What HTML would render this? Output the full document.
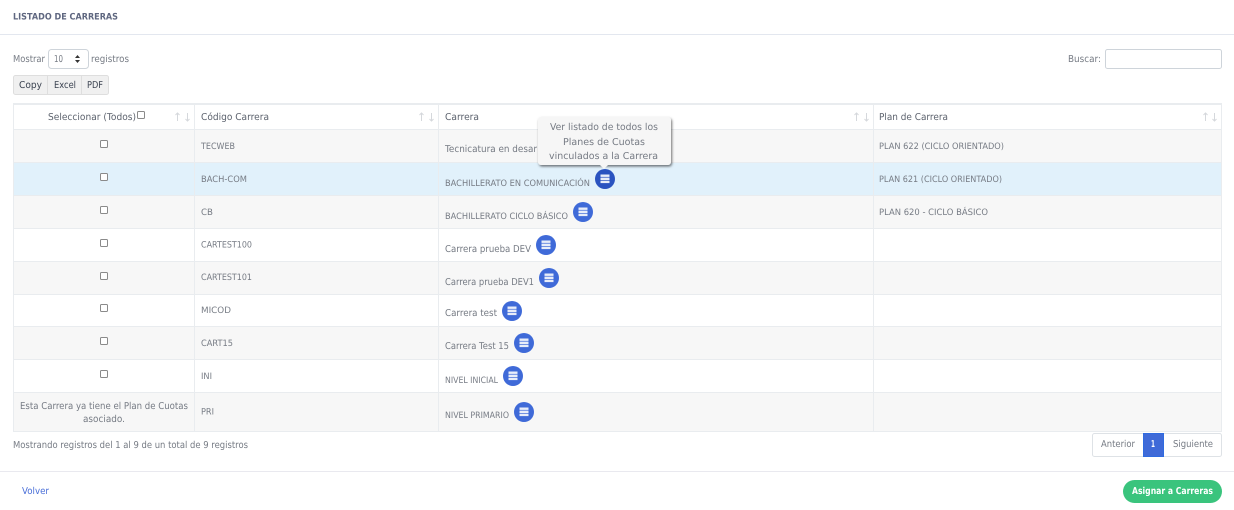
<!DOCTYPE html>
<html lang="es">
<head>
<meta charset="utf-8">
<title>Listado de Carreras</title>
<style>
html,body{margin:0;padding:0;background:#fff;width:1234px;height:510px;overflow:hidden}
svg{display:block}
text{font-family:"DejaVu Sans",sans-serif;font-size:9.5px;fill:#767b84;text-rendering:geometricPrecision}
.u{font-size:8.8px}
.h{fill:#5d636e}
.b{font-weight:bold}
.cb{fill:#fff;stroke:#8a8a8a;stroke-width:1}
.bl{fill:#fff}
</style>
</head>
<body>
<svg width="1234" height="510" viewBox="0 0 1234 510" xmlns="http://www.w3.org/2000/svg">
<defs>
<filter id="sh" x="-10%" y="-10%" width="125%" height="130%"><feDropShadow dx="1" dy="1.5" stdDeviation="1.2" flood-color="#000" flood-opacity=".55"/></filter>
<g id="ic"><rect x="-4.500" y="-4.500" width="9" height="2.400" fill="#e8edf9"/><rect x="-4.500" y="-1.400" width="9" height="2.400" fill="#e8edf9"/><rect x="-4.500" y="1.700" width="9" height="2.400" fill="#e8edf9"/></g>
</defs>

<text x="13" y="19.500" class="b" style="fill:#5f6780;font-size:9px" textLength="105" lengthAdjust="spacingAndGlyphs">LISTADO DE CARRERAS</text>
<rect x="0" y="34" width="1234" height="1" fill="#e3e7ef"/>

<text x="13" y="62" textLength="32" lengthAdjust="spacingAndGlyphs">Mostrar</text>
<rect x="48.500" y="49.500" width="40" height="19" rx="3" fill="#fff" stroke="#ced4da"/>
<text x="54" y="62" textLength="9" lengthAdjust="spacingAndGlyphs">10</text>
<path d="M75 58l2.500-3 2.500 3zM75 60l2.500 3 2.500-3z" fill="#333"/>
<text x="91" y="62" textLength="38" lengthAdjust="spacingAndGlyphs">registros</text>

<rect x="13.500" y="75.500" width="95" height="19" rx="2" fill="#f0f0f0" stroke="#dedede"/>
<path d="M47.500 75v20M81.500 75v20" stroke="#dedede"/>
<text x="19" y="88" textLength="23" lengthAdjust="spacingAndGlyphs" style="fill:#3a4250">Copy</text>
<text x="54" y="88" textLength="22" lengthAdjust="spacingAndGlyphs" style="fill:#3a4250">Excel</text>
<text x="87" y="88" textLength="16" lengthAdjust="spacingAndGlyphs" style="fill:#3a4250">PDF</text>

<text x="1068" y="62" textLength="33" lengthAdjust="spacingAndGlyphs">Buscar:</text>
<rect x="1105.500" y="49.500" width="116" height="19" rx="2" fill="#fff" stroke="#ced4da"/>

<!-- table rows -->
<rect x="13" y="130" width="1209" height="32" fill="#f7f7f7"/>
<rect x="13" y="163" width="1209" height="32" fill="#e1f1fb"/>
<rect x="13" y="196" width="1209" height="32" fill="#f7f7f7"/>
<rect x="13" y="262" width="1209" height="32" fill="#f7f7f7"/>
<rect x="13" y="327" width="1209" height="32" fill="#f7f7f7"/>
<rect x="13" y="393" width="1209" height="38" fill="#f7f7f7"/>
<rect x="13" y="103" width="1209" height="2" fill="#e9ecef"/>
<path d="M13 129.500h1209M13 162.500h1209M13 195.500h1209M13 228.500h1209M13 261.500h1209M13 294.500h1209M13 326.500h1209M13 359.500h1209M13 392.500h1209M13 431.500h1209M13.500 103v329M194.500 103v329M438.500 103v329M873.500 103v329M1221.500 103v329" stroke="#e9ecef" fill="none"/>

<!-- header -->
<text x="48" y="120" class="h" textLength="88" lengthAdjust="spacingAndGlyphs">Seleccionar (Todos)</text>
<rect x="137.500" y="111.500" width="7" height="7" rx="1" class="cb"/>
<text x="201" y="120" class="h" textLength="68" lengthAdjust="spacingAndGlyphs">Código Carrera</text>
<text x="445" y="120" class="h" textLength="34" lengthAdjust="spacingAndGlyphs">Carrera</text>
<text x="879" y="120" class="h" textLength="69" lengthAdjust="spacingAndGlyphs">Plan de Carrera</text>
<g stroke="#d5d8dc" fill="none" stroke-width="1">
<path d="M177.500 121v-8m-2 2l2-2 2 2M187.500 113v8m-2-2l2 2 2-2"/>
<path d="M421.500 121v-8m-2 2l2-2 2 2M431.500 113v8m-2-2l2 2 2-2"/>
<path d="M856.500 121v-8m-2 2l2-2 2 2M866.500 113v8m-2-2l2 2 2-2"/>
<path d="M1205.500 121v-8m-2 2l2-2 2 2M1214.500 113v8m-2-2l2 2 2-2"/>
</g>

<!-- checkboxes -->
<rect x="100.500" y="140.500" width="7" height="7" rx="1" class="cb"/>
<rect x="100.500" y="173.500" width="7" height="7" rx="1" class="cb"/>
<rect x="100.500" y="206.500" width="7" height="7" rx="1" class="cb"/>
<rect x="100.500" y="239.500" width="7" height="7" rx="1" class="cb"/>
<rect x="100.500" y="272.500" width="7" height="7" rx="1" class="cb"/>
<rect x="100.500" y="304.500" width="7" height="7" rx="1" class="cb"/>
<rect x="100.500" y="337.500" width="7" height="7" rx="1" class="cb"/>
<rect x="100.500" y="370.500" width="7" height="7" rx="1" class="cb"/>
<text x="20" y="409" textLength="168" lengthAdjust="spacingAndGlyphs">Esta Carrera ya tiene el Plan de Cuotas</text>
<text x="83" y="422" textLength="42" lengthAdjust="spacingAndGlyphs">asociado.</text>

<!-- codes -->
<text x="201" y="149" class="u" textLength="34" lengthAdjust="spacingAndGlyphs">TECWEB</text>
<text x="201" y="182" class="u" textLength="46" lengthAdjust="spacingAndGlyphs">BACH-COM</text>
<text x="201" y="215" class="u" textLength="12" lengthAdjust="spacingAndGlyphs">CB</text>
<text x="201" y="247.500" class="u" textLength="51" lengthAdjust="spacingAndGlyphs">CARTEST100</text>
<text x="201" y="280" class="u" textLength="51" lengthAdjust="spacingAndGlyphs">CARTEST101</text>
<text x="201" y="313" class="u" textLength="30" lengthAdjust="spacingAndGlyphs">MICOD</text>
<text x="201" y="346" class="u" textLength="32" lengthAdjust="spacingAndGlyphs">CART15</text>
<text x="201" y="379" class="u" textLength="11" lengthAdjust="spacingAndGlyphs">INI</text>
<text x="201" y="414.500" class="u" textLength="13" lengthAdjust="spacingAndGlyphs">PRI</text>

<!-- careers -->
<text x="445" y="152" textLength="92" lengthAdjust="spacingAndGlyphs">Tecnicatura en desar</text>
<text x="445" y="186" class="u" textLength="145" lengthAdjust="spacingAndGlyphs">BACHILLERATO EN COMUNICACIÓN</text>
<text x="445" y="219" class="u" textLength="123" lengthAdjust="spacingAndGlyphs">BACHILLERATO CICLO BÁSICO</text>
<text x="445" y="252" textLength="86" lengthAdjust="spacingAndGlyphs">Carrera prueba DEV</text>
<text x="445" y="285" textLength="89" lengthAdjust="spacingAndGlyphs">Carrera prueba DEV1</text>
<text x="445" y="316" textLength="52" lengthAdjust="spacingAndGlyphs">Carrera test</text>
<text x="445" y="349" textLength="64" lengthAdjust="spacingAndGlyphs">Carrera Test 15</text>
<text x="445" y="383" class="u" textLength="53" lengthAdjust="spacingAndGlyphs">NIVEL INICIAL</text>
<text x="445" y="418" class="u" textLength="64" lengthAdjust="spacingAndGlyphs">NIVEL PRIMARIO</text>

<!-- list buttons -->
<circle cx="605" cy="179" r="10" fill="#2a53c0"/><use href="#ic" x="605" y="179"/>
<circle cx="583" cy="212" r="10" fill="#3f6ad8"/><use href="#ic" x="583" y="212"/>
<circle cx="546" cy="245" r="10" fill="#3f6ad8"/><use href="#ic" x="546" y="245"/>
<circle cx="549" cy="278" r="10" fill="#3f6ad8"/><use href="#ic" x="549" y="278"/>
<circle cx="512" cy="311" r="10" fill="#3f6ad8"/><use href="#ic" x="512" y="311"/>
<circle cx="524" cy="343" r="10" fill="#3f6ad8"/><use href="#ic" x="524" y="343"/>
<circle cx="513" cy="376" r="10" fill="#3f6ad8"/><use href="#ic" x="513" y="376"/>
<circle cx="524" cy="412" r="10" fill="#3f6ad8"/><use href="#ic" x="524" y="412"/>

<!-- plans -->
<text x="879" y="149" class="u" textLength="125" lengthAdjust="spacingAndGlyphs">PLAN 622 (CICLO ORIENTADO)</text>
<text x="879" y="182" class="u" textLength="123" lengthAdjust="spacingAndGlyphs">PLAN 621 (CICLO ORIENTADO)</text>
<text x="879" y="215" class="u" textLength="109" lengthAdjust="spacingAndGlyphs">PLAN 620 - CICLO BÁSICO</text>

<!-- tooltip -->
<rect x="538" y="117" width="133" height="48" rx="3" fill="#f6f6f6" filter="url(#sh)"/>
<path d="M600 165l4 4 4-4z" fill="#f6f6f6"/>
<text x="550" y="130" textLength="108" lengthAdjust="spacingAndGlyphs">Ver listado de todos los</text>
<text x="563" y="145" textLength="82" lengthAdjust="spacingAndGlyphs">Planes de Cuotas</text>
<text x="549" y="159" textLength="109" lengthAdjust="spacingAndGlyphs">vinculados a la Carrera</text>

<!-- footer of table -->
<text x="13" y="448" textLength="235" lengthAdjust="spacingAndGlyphs">Mostrando registros del 1 al 9 de un total de 9 registros</text>
<rect x="1092.500" y="433.500" width="129" height="23" rx="2" fill="#fff" stroke="#dee2e6"/>
<rect x="1143.500" y="433.500" width="20" height="23" fill="#3f6ad8" stroke="#2f6be0"/>
<text x="1101" y="447" textLength="34" lengthAdjust="spacingAndGlyphs">Anterior</text>
<text x="1151" y="447" class="bl b" textLength="4" lengthAdjust="spacingAndGlyphs">1</text>
<text x="1173" y="447" textLength="40" lengthAdjust="spacingAndGlyphs">Siguiente</text>

<rect x="0" y="471" width="1234" height="1" fill="#e9e9ef"/>
<text x="22" y="494" style="fill:#4a6fd8" textLength="27" lengthAdjust="spacingAndGlyphs">Volver</text>
<rect x="1123" y="480" width="99" height="23" rx="11.500" fill="#3ac47d"/>
<text x="1132" y="494" class="bl b" textLength="81" lengthAdjust="spacingAndGlyphs">Asignar a Carreras</text>
</svg>
</body>
</html>
